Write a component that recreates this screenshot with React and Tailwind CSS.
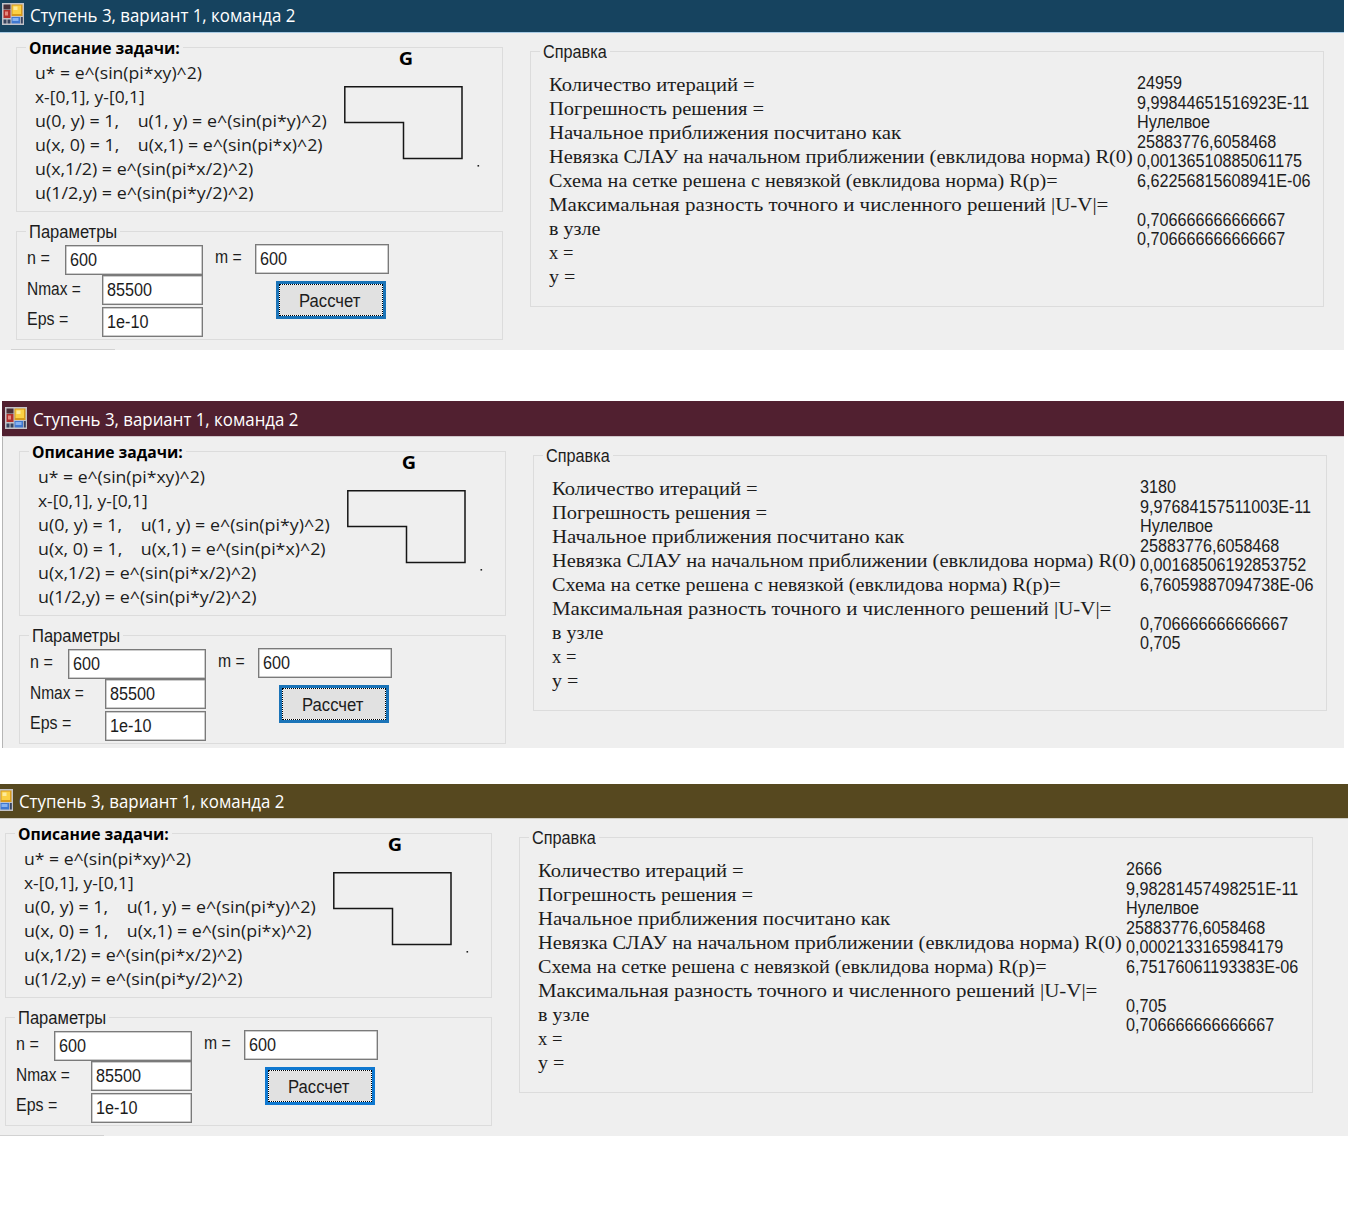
import { useLayoutEffect, useRef } from "react";

const description = [
  ["u* = e^(sin(pi*xy)^2)", 167],
  ["x-[0,1], y-[0,1]", 110],
  ["u(0, y) = 1,    u(1, y) = e^(sin(pi*y)^2)", 292],
  ["u(x, 0) = 1,    u(x,1) = e^(sin(pi*x)^2)", 288],
  ["u(x,1/2) = e^(sin(pi*x/2)^2)", 218],
  ["u(1/2,y) = e^(sin(pi*y/2)^2)", 218],
];

const report = [
  ["Количество итераций =", 206],
  ["Погрешность решения =", 215],
  ["Начальное приближения посчитано как", 352],
  ["Невязка СЛАУ на начальном приближении (евклидова норма) R(0)", 584],
  ["Схема на сетке решена с невязкой (евклидова норма) R(p)=", 509],
  ["Максимальная разность точного и численного решений |U-V|=", 559],
  ["в узле", 51],
  ["x =", 24],
  ["y =", 26],
];

// Stretches or condenses one line of text to a given width.
function Fit({ width, className = "", children }) {
  const ref = useRef(null);
  useLayoutEffect(() => {
    const el = ref.current;
    el.style.transform = `scaleX(${width / el.offsetWidth})`;
  }, [width]);
  return (
    <span className={`block shrink-0 ${className}`} style={{ width }}>
      <span ref={ref} className="inline-block origin-left whitespace-pre">
        {children}
      </span>
    </span>
  );
}

function FormIcon() {
  return (
    <svg className="mb-[2px] h-[22px] w-[22px] shrink-0" viewBox="0 0 22 22">
      <rect width="22" height="22" fill="#c3c3c8" />
      <rect x="1.5" y="1.5" width="7" height="5" fill="#4a3038" />
      <rect x="1.5" y="7" width="7" height="8" fill="#b3302c" />
      <rect x="3" y="8.5" width="3" height="4" fill="#e58a80" />
      <rect x="1.5" y="16.5" width="3" height="4" fill="#37445f" />
      <rect x="5.5" y="16.5" width="3" height="4" fill="#37445f" />
      <rect x="9.5" y="1.5" width="11" height="11.5" fill="#d79a1b" />
      <rect x="10.5" y="2.5" width="8.5" height="8.5" fill="#fbd044" />
      <rect x="11.5" y="3.5" width="4" height="3.5" fill="#fdeb9c" />
      <rect x="9.5" y="14" width="8.5" height="6.5" fill="#3f78d0" />
      <rect x="10.5" y="15" width="6" height="3" fill="#86b2f0" />
      <rect x="18.8" y="14" width="2" height="6.5" fill="#37445f" />
    </svg>
  );
}

function Group({ title, titleWidth, bold, className, children }) {
  return (
    <fieldset className={`min-w-0 shrink-0 border border-[#dcdcdc] ${className}`}>
      <legend className="ml-[9px] h-4 px-[3px] leading-4">
        <Fit
          width={titleWidth}
          className={
            bold
              ? "relative top-px font-['Open_Sans','Noto_Sans',sans-serif] text-[16px] font-bold text-black"
              : "relative top-px text-[17.5px]"
          }
        >
          {title}
        </Fit>
      </legend>
      {children}
    </fieldset>
  );
}

function Field({ value, className }) {
  return (
    <div
      className={`flex h-[30px] items-center border border-[#7a7a7a] bg-white pl-[3.5px] shadow-[inset_0_0_0_0.5px_#9a9a9a] ${className}`}
    >
      <span className="origin-left scale-x-[0.9] text-[18px] leading-none">{value}</span>
    </div>
  );
}

function AppWindow({ values, frame, bar, body, button }) {
  return (
    <section className={`overflow-hidden bg-[#efefef] ${frame}`}>
      <header className={`flex items-end border-b pb-[5px] ${bar}`}>
        <FormIcon />
        <Fit
          width={265}
          className="mb-px ml-[6px] font-['Open_Sans','Noto_Sans',sans-serif] text-[18px] leading-[22px] text-white"
        >
          Ступень 3, вариант 1, команда 2
        </Fit>
      </header>
      <div className={`flex w-[1348px] items-start pt-[6px] ${body}`}>
        <div className="flex flex-col">
          <Group title="Описание задачи:" titleWidth={151} bold className="h-[173px] w-[487px]">
            <div className="flex">
              <div className="ml-[18px] mt-[6px] w-[309px] font-['Open_Sans','Noto_Sans',sans-serif] text-[16px] leading-6">
                {description.map(([text, width]) => (
                  <Fit key={text} width={width}>
                    {text}
                  </Fit>
                ))}
              </div>
              <div className="-mt-[5px]">
                <div className="w-[124px] scale-x-110 text-center font-['Open_Sans','Noto_Sans',sans-serif] text-[18px] font-bold leading-[17px] text-black">
                  G
                </div>
                <svg className="mt-[19px] h-[84px] w-[140px]" viewBox="0 0 140 84">
                  <path
                    d="M0.8 0.8H118V72.5H59.5V36.5H0.8Z"
                    fill="none"
                    stroke="#151515"
                    strokeWidth="1.5"
                  />
                  <rect x="133.5" y="79" width="1.6" height="1.6" fill="#222" />
                </svg>
              </div>
            </div>
          </Group>
          <Group title="Параметры" titleWidth={88} className="mt-[11px] h-[117px] w-[487px]">
            <div className="flex text-[17.5px] leading-5">
              <div className="ml-[10px] w-[176px] pt-[6px]">
                <div className="flex">
                  <Fit width={23} className="mt-[3px]">n =</Fit>
                  <Field value="600" className="ml-auto w-[138px]" />
                </div>
                <div className="flex">
                  <Fit width={54} className="mt-1">Nmax =</Fit>
                  <Field value="85500" className="ml-auto w-[101px]" />
                </div>
                <div className="mt-[2px] flex">
                  <Fit width={41} className="mt-[2px]">Eps =</Fit>
                  <Field value="1e-10" className="ml-auto w-[101px]" />
                </div>
              </div>
              <div className="ml-[12px] w-[174px] pt-[5px]">
                <div className="flex">
                  <Fit width={27} className="mt-[3px]">m =</Fit>
                  <Field value="600" className="ml-auto w-[134px]" />
                </div>
                <div className={`ml-[61px] mt-[7px] h-[38px] w-[110px] p-[3px] ${button}`}>
                  <div className="h-full border border-dotted border-black bg-white">
                    <div className="flex h-full items-center justify-center bg-[#e1e1e1] bg-clip-padding pr-[3px] pt-[2px]">
                      <Fit width={61}>Рассчет</Fit>
                    </div>
                  </div>
                </div>
              </div>
            </div>
          </Group>
          <div className="-ml-[5px] mt-[9px] h-px w-[104px] bg-[#d2d2d2]" />
        </div>
        <Group title="Справка" titleWidth={64} className="ml-[27px] mt-[4px] h-[264px] w-[794px]">
          <div className="ml-[18px] flex">
            <div className="mt-[14px] w-[588px] shrink-0 font-['Liberation_Serif',serif] text-[18.5px] leading-6">
              {report.map(([text, width]) => (
                <Fit key={text} width={width}>
                  {text}
                </Fit>
              ))}
            </div>
            <div className="mt-[15px] shrink-0 origin-left scale-x-[0.898] whitespace-pre text-[18px] leading-[19.5px]">
              {values.map((value, i) => (
                <div key={i} className="h-[19.5px]">
                  {value}
                </div>
              ))}
            </div>
          </div>
        </Group>
      </div>
    </section>
  );
}

export default function App() {
  return (
    <main className="h-[1228px] w-[1348px] overflow-hidden bg-white font-['Liberation_Sans',Arial,sans-serif] text-[#1c1c1c]">
      <AppWindow
        frame="h-[350px] w-[1344px]"
        bar="h-[33px] border-[#a9cbe4] bg-[#16435f] pl-[2px]"
        body="pl-4"
        button="bg-[#1b74b8]"
        values={[
          "24959",
          "9,99844651516923E-11",
          "Нулелвое",
          "25883776,6058468",
          "0,00136510885061175",
          "6,62256815608941E-06",
          "",
          "0,706666666666667",
          "0,706666666666667",
        ]}
      />
      <AppWindow
        frame="ml-[2px] mt-[51px] h-[347px] w-[1342px]"
        bar="h-[36px] border-[#cfc5c9] bg-[#512030] pl-[3px]"
        body="border-l border-[#b5b5b5] pl-4"
        button="bg-[#1b74b8]"
        values={[
          "3180",
          "9,97684157511003E-11",
          "Нулелвое",
          "25883776,6058468",
          "0,00168506192853752",
          "6,76059887094738E-06",
          "",
          "0,706666666666667",
          "0,705",
        ]}
      />
      <AppWindow
        frame="mt-[36px] h-[352px] w-[1348px]"
        bar="-ml-[9px] h-[35px] border-[#cfccc2] bg-[#56481f]"
        body="pl-[5px]"
        button="bg-[#0f78d0]"
        values={[
          "2666",
          "9,98281457498251E-11",
          "Нулелвое",
          "25883776,6058468",
          "0,0002133165984179",
          "6,75176061193383E-06",
          "",
          "0,705",
          "0,706666666666667",
        ]}
      />
    </main>
  );
}
